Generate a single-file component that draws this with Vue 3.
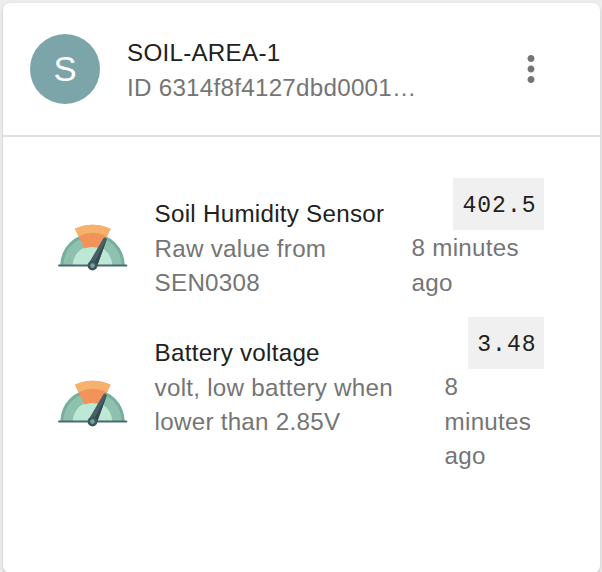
<script setup>
const sensors = [
  { name: 'Soil Humidity Sensor', lines: ['Raw value from', 'SEN0308'], value: '402.5', ago: ['8 minutes', 'ago'], kind: 'humidity' },
  { name: 'Battery voltage', lines: ['volt, low battery when', 'lower than 2.85V'], value: '3.48', ago: ['8', 'minutes', 'ago'], kind: 'battery' }
]
</script>

<template>
  <main class="page">
    <section class="card">
      <header class="head">
        <div class="avatar">S</div>
        <div class="heading">
          <div class="title">SOIL-AREA-1</div>
          <div class="sub">ID 6314f8f4127dbd0001…</div>
        </div>
        <button class="menu" aria-label="Menu">
          <svg viewBox="0 0 24 24"><path d="M12 8c1.1 0 2-.9 2-2s-.9-2-2-2-2 .9-2 2 .9 2 2 2zm0 2c-1.1 0-2 .9-2 2s.9 2 2 2 2-.9 2-2-.9-2-2-2zm0 6c-1.1 0-2 .9-2 2s.9 2 2 2 2-.9 2-2-.9-2-2-2z" /></svg>
        </button>
      </header>
      <div class="list">
        <article v-for="s in sensors" :key="s.name" class="row" :class="s.kind">
          <svg class="gauge" viewBox="0 0 70 48">
            <path d="M2.3 41.5A32.2 32.2 0 0 1 66.7 41.5Z" fill="#74b09e" />
            <path d="M5.3 41.5A29.2 29.2 0 0 1 63.7 41.5Z" fill="#8fc1ae" />
            <path d="M14.8 41.5A19.7 19.7 0 0 1 54.2 41.5Z" fill="#bce8d5" />
            <path d="M17 4.7Q34.5 -3.2 52.6 4.7L43 25Q34.5 21 26.5 24.6Z" fill="#f3935c" />
            <path d="M17 4.7Q34.5 -3.2 52.6 4.7L49 12.4Q34.5 5 20.5 12.2Z" fill="#f6b16d" />
            <path d="M1 41.5H68.4" stroke="#4b6970" stroke-width="1.9" stroke-linecap="round" />
            <path d="M45.6 14 Q46.6 12.8 48.9 15 L38.9 42.5 30.6 39.5Z" fill="#466065" />
            <path d="M48.9 15 38.9 42.5 35.6 40Z" fill="#334950" />
            <circle cx="34.5" cy="41.6" r="4.9" fill="#3d555b" />
            <circle cx="34.5" cy="41.6" r="2.3" fill="#78a39f" />
          </svg>
          <div class="info">
            <div class="title">{{ s.name }}</div>
            <div v-for="l in s.lines" :key="l" class="sub">{{ l }}</div>
          </div>
          <div class="reading">
            <code class="value">{{ s.value }}</code>
            <div class="ago"><div v-for="a in s.ago" :key="a" class="sub">{{ a }}</div></div>
          </div>
        </article>
      </div>
    </section>
  </main>
</template>

<style>
body { background: #eeeeee; }
</style>
<style scoped>
.page {
  box-sizing: border-box;
  height: 572px;
  padding: 3px 2px 0 3px;
  overflow: hidden;
  font: 24.2px/34.7px "Liberation Sans", Arial, sans-serif;
  letter-spacing: 0.26px;
}
.card {
  height: 570px;
  border-radius: 7px;
  background: #fff;
  box-shadow: 0 2px 2px rgba(0, 0, 0, 0.12), 0 1px 4px rgba(0, 0, 0, 0.1);
}
.head {
  box-sizing: border-box;
  height: 134px;
  display: flex;
  align-items: flex-start;
  padding: 31px 48px 0 27px;
  border-bottom: 2px solid #e0e0e0;
}
.avatar {
  width: 70px;
  height: 70px;
  border-radius: 50%;
  background: #7ba5a8;
  color: #fff;
  font-size: 34.7px;
  line-height: 71px;
  text-align: center;
  letter-spacing: 0;
}
.heading { flex: 1; padding: 2px 0 0 27px; }
.title { color: #212121; white-space: nowrap; }
.sub { color: #757575; white-space: nowrap; }
.menu {
  width: 42px;
  height: 42px;
  margin-top: 14px;
  padding: 0;
  border: 0;
  background: none;
}
.menu svg { display: block; width: 42px; height: 42px; fill: #757575; }
.list { padding: 41px 56px 0 55px; }
.row { display: flex; height: 138.8px; }
.gauge { width: 70px; height: 48px; margin-top: 46px; }
.info { flex: 1; padding: 19px 0 0 26.6px; }
.reading { display: flex; flex-direction: column; align-items: flex-end; }
.value {
  flex: none;
  height: 52px;
  box-sizing: border-box;
  padding: 11px 7.5px 0 9.5px;
  background: #f0f0f0;
  color: #212121;
  font: 23px/34.7px "Liberation Mono", monospace;
  letter-spacing: 1px;
}
.ago { padding-top: 1px; }
.humidity .ago { width: 132.4px; }
.battery .ago { width: 99.4px; }
.battery .gauge { margin-top: 63.2px; }
</style>
